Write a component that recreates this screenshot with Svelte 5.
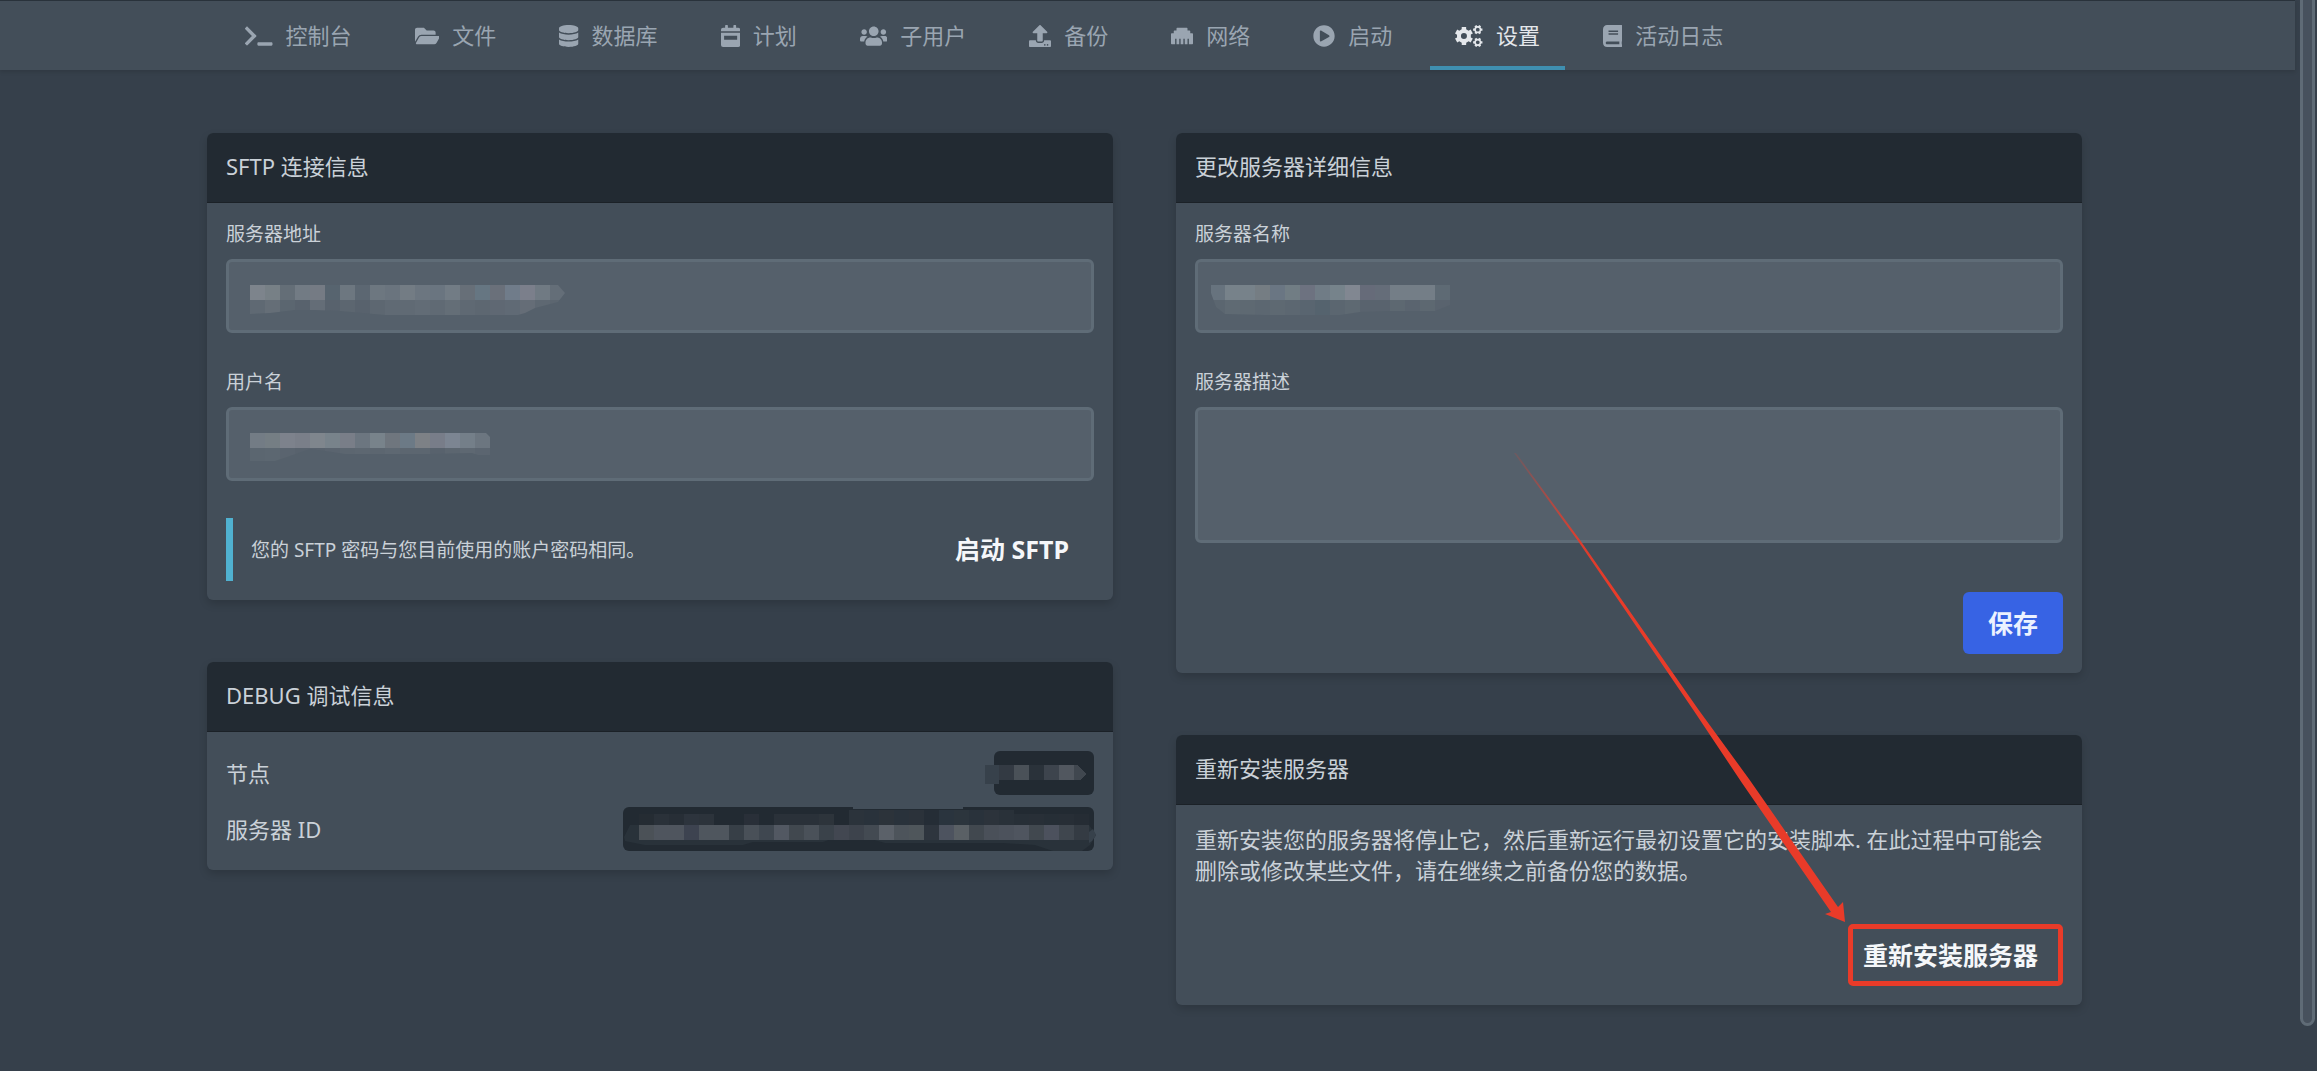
<script lang="ts">
  // outline of a six-toothed gear with a round hole
  const gear = (cx: number, cy: number, r: number, hole: number, turn: number) => {
    const steps: [number, number][] = [
      [-0.24, 1],
      [0.24, 1],
      [0.32, 0.76],
      [0.72, 0.76]
    ];
    const points: string[] = [];
    for (let i = 0; i < 6; i++) {
      for (const [offset, scale] of steps) {
        const angle = turn + (i * Math.PI) / 3 + offset;
        const x = cx + Math.cos(angle) * r * scale;
        const y = cy + Math.sin(angle) * r * scale;
        points.push(`${x.toFixed(1)} ${y.toFixed(1)}`);
      }
    }
    return `M${points.join('L')}ZM${cx - hole} ${cy}a${hole} ${hole} 0 1 0 ${hole * 2} 0a${hole} ${hole} 0 1 0 ${-hole * 2} 0Z`;
  };

  const tabs = [
    {
      label: '控制台',
      size: 640,
      path: 'M257.981 272.971L63.638 467.314c-9.373 9.373-24.569 9.373-33.941 0L7.029 444.647c-9.357-9.357-9.375-24.522-.04-33.901L161.011 256 6.99 101.255c-9.335-9.379-9.317-24.544.04-33.901l22.667-22.667c9.373-9.373 24.569-9.373 33.941 0L257.981 239.03c9.373 9.372 9.373 24.568 0 33.941zM640 456v-32c0-13.255-10.745-24-24-24H312c-13.255 0-24 10.745-24 24v32c0 13.255 10.745 24 24 24h304c13.255 0 24-10.745 24-24z'
    },
    {
      label: '文件',
      size: 576,
      path: 'M572.694 292.093L500.27 416.248A63.997 63.997 0 0 1 444.989 448H45.025c-18.523 0-30.064-20.093-20.731-36.093l72.424-124.155A64 64 0 0 1 152 256h399.964c18.523 0 30.064 20.093 20.73 36.093zM152 224h328v-48c0-26.51-21.49-48-48-48H272l-64-64H48C21.49 64 0 85.49 0 112v278.046l69.077-118.418C86.214 242.25 117.989 224 152 224z'
    },
    {
      label: '数据库',
      size: 448,
      path: 'M448 73.143v45.714C448 159.143 347.667 192 224 192S0 159.143 0 118.857V73.143C0 32.857 100.333 0 224 0s224 32.857 224 73.143zM448 176v102.857C448 319.143 347.667 352 224 352S0 319.143 0 278.857V176c48.125 33.143 136.208 48.572 224 48.572S399.874 209.143 448 176zm0 160v102.857C448 479.143 347.667 512 224 512S0 479.143 0 438.857V336c48.125 33.143 136.208 48.572 224 48.572S399.874 369.143 448 336z'
    },
    {
      label: '计划',
      size: 448,
      path: 'M144 0h-32a16 16 0 0 0-16 16v48H48a48 48 0 0 0-48 48v36h448v-36a48 48 0 0 0-48-48h-48V16a16 16 0 0 0-16-16h-32a16 16 0 0 0-16 16v48H160V16a16 16 0 0 0-16-16zM0 180v284a48 48 0 0 0 48 48h352a48 48 0 0 0 48-48V180zM72 250h304v96H72z'
    },
    {
      label: '子用户',
      size: 640,
      path: 'M96 224c35.3 0 64-28.7 64-64s-28.7-64-64-64-64 28.7-64 64 28.7 64 64 64zm448 0c35.3 0 64-28.7 64-64s-28.7-64-64-64-64 28.7-64 64 28.7 64 64 64zm32 32h-64c-17.6 0-33.5 7.1-45.1 18.6 40.3 22.1 68.9 62 75.1 109.4h66c17.7 0 32-14.3 32-32v-32c0-35.3-28.7-64-64-64zm-256 0c61.9 0 112-50.1 112-112S381.9 32 320 32 208 82.1 208 144s50.1 112 112 112zm76.8 32h-8.3c-20.8 10-43.9 16-68.5 16s-47.6-6-68.5-16h-8.3C179.6 288 128 339.6 128 403.2V432c0 26.5 21.5 48 48 48h288c26.5 0 48-21.5 48-48v-28.8c0-63.6-51.6-115.2-115.2-115.2zm-223.7-13.4C161.5 263.1 145.6 256 128 256H64c-35.3 0-64 28.7-64 64v32c0 17.7 14.3 32 32 32h65.9c6.3-47.4 34.9-87.3 75.2-109.4z'
    },
    {
      label: '备份',
      size: 512,
      path: 'M296 384h-80c-13.3 0-24-10.7-24-24V192h-87.7c-17.8 0-26.7-21.5-14.1-34.1L242.3 5.7c7.5-7.5 19.8-7.5 27.3 0l152.2 152.2c12.6 12.6 3.7 34.1-14.1 34.1H320v168c0 13.3-10.7 24-24 24zm216-8v112c0 13.3-10.7 24-24 24H24c-13.3 0-24-10.7-24-24V376c0-13.3 10.7-24 24-24h136v8c0 30.9 25.1 56 56 56h80c30.9 0 56-25.1 56-56v-8h136c13.3 0 24 10.7 24 24zm-124 88c0-11-9-20-20-20s-20 9-20 20 9 20 20 20 20-9 20-20zm64 0c0-11-9-20-20-20s-20 9-20 20 9 20 20 20 20-9 20-20z'
    },
    {
      label: '网络',
      size: 512,
      path: 'M496 192h-48v-48c0-8.8-7.2-16-16-16h-48V80c0-8.8-7.2-16-16-16H144c-8.8 0-16 7.2-16 16v48H80c-8.8 0-16 7.2-16 16v48H16c-8.8 0-16 7.2-16 16v224c0 8.8 7.2 16 16 16h80V320h32v128h64V320h32v128h64V320h32v128h64V320h32v128h80c8.8 0 16-7.2 16-16V208c0-8.8-7.2-16-16-16z'
    },
    {
      label: '启动',
      size: 512,
      path: 'M256 8C119 8 8 119 8 256s111 248 248 248 248-111 248-248S393 8 256 8zm115.7 272l-176 101c-15.8 8.8-35.7-2.5-35.7-21V152c0-18.4 19.8-29.8 35.7-21l176 107c16.4 9.2 16.4 32.9 0 42z'
    },
    {
      label: '设置',
      size: 640,
      active: true,
      path: gear(208, 256, 216, 70, Math.PI / 6) + gear(530, 108, 112, 44, 0) + gear(530, 404, 112, 44, 0)
    },
    {
      label: '活动日志',
      size: 448,
      path: 'M448 360V24c0-13.3-10.7-24-24-24H96C43 0 0 43 0 96v320c0 53 43 96 96 96h328c13.3 0 24-10.7 24-24v-16c0-7.5-3.5-14.3-8.9-18.7-4.2-15.4-4.2-59.3 0-74.7 5.4-4.3 8.9-11.1 8.9-18.6zM128 134c0-3.3 2.7-6 6-6h212c3.3 0 6 2.7 6 6v20c0 3.3-2.7 6-6 6H134c-3.3 0-6-2.7-6-6v-20zm0 64c0-3.3 2.7-6 6-6h212c3.3 0 6 2.7 6 6v20c0 3.3-2.7 6-6 6H134c-3.3 0-6-2.7-6-6v-20zm253.4 250H96c-17.7 0-32-14.3-32-32 0-17.6 14.4-32 32-32h285.4c-1.9 17.1-1.9 46.9 0 64z'
    }
  ];

  // mosaics that hide private values, 15px cells in two rows
  const masks = {
    address: {
      clip: '0,0 308,0 315,8 308,17 285,23 275,28 268,30 135,30 90,26 65,25 45,25 20,28 0,29',
      top: '7d848c 778086 646e77 727b84 757b84 57646f 6d7780 5c6772 6d7780 6a747e 737c84 6c7680 6a7580 727c85 676f78 667682 6a707a 707c8a 7b7f8b 707a83 646e78',
      bottom: '5f6973 656e77 5b6670 58626d 646d77 58626d 5c6670 58626d 5d6771 606a74 606a74 626c76 606a74 646e77 5f6973 5d6771 5f6873 606a75 656d77 5e6872 5c6670'
    },
    user: {
      clip: '0,0 236,0 240,4 240,22 228,22 222,20 180,21 95,21 75,18 60,16 40,23 25,28 0,28',
      top: '737c85 757e84 7d828c 7a7f89 7f868d 78838b 797e88 6c7680 78838b 6f767e 6c7a86 7d8186 787d89 7c8592 747f89 6c7680',
      bottom: '5b6670 5c6771 5a646f 58626d 58626d 5a646f 5c6670 5d6771 5c6670 5e6872 5c6670 5c6670 58626d 5c6670 5e6872 5b6570'
    },
    name: {
      clip: '1,0 240,0 240,20 225,26 180,26 150,27 130,30 55,30 15,29 6,22 1,8',
      top: '67737e 77828a 77828a 757d83 6a7683 717d84 6d7280 707c86 76838b 818791 666b79 656d79 747e87 747e87 747e87 5e6a74',
      bottom: '5b6670 5f6a73 5e6972 5c6771 5e6972 5c6771 596570 55636e 5b6670 5e6972 59636e 59636e 5d6871 5a646f 5d6871 59636e'
    }
  };

  const nodeCells = '37414b 333a43 4a5158 2a323a 3d444d 51575f 40474f'.split(' ');
  const idCells =
    '4b5157 4f555e 4f555e 3d4350 4f565e 4f565e 373f47 495058 3f4750 525862 41484f 4a5159 3a424a 424751 3d434c 434a52 5b6169 4d545b 4f565b 2e353e 4d535f 5a6065 41484f 4a5059 4c525c 4f555f 41484f 4c515d 3f464e 343b43'.split(' ');
  const idTop =
    '252c33 2a3139 272e36 2d343d 2c333b 222a32 222a32 292f38 222a32 2a3139 2a3139 2a3139 2d343b 222a32 2b333b 29323b 2c333a 29323b 2b323a 252d36 2a343e 2c353d 29323b 2c333b 293139 272f37 282f37 262e36 272e36 252c34'.split(' ');

  const description = '';
</script>

{#snippet mosaic(id: string, mask: { clip: string; top: string; bottom: string })}
  <svg class="mosaic" class:near={id === 'name'} width="315" height="30" viewBox="0 0 315 30" shape-rendering="crispEdges" aria-hidden="true">
    <clipPath id="clip-{id}"><polygon points={mask.clip} /></clipPath>
    <g clip-path="url(#clip-{id})">
      {#each mask.top.split(' ') as color, i}
        <rect x={i * 15} y="0" width="15" height="15" fill="#{color}" />
      {/each}
      {#each mask.bottom.split(' ') as color, i}
        <rect x={i * 15} y="15" width="15" height="15" fill="#{color}" />
      {/each}
    </g>
  </svg>
{/snippet}

<div class="page">
  <nav class="subnav">
    <div class="tabs">
      {#each tabs as tab}
        <a href="#{tab.label}" class="tab" class:active={tab.active}>
          <svg height="22" viewBox="0 0 {tab.size} 512" fill="currentColor" fill-rule="evenodd" aria-hidden="true">
            <path d={tab.path} />
          </svg>
          <span>{tab.label}</span>
        </a>
      {/each}
    </div>
  </nav>

  <main class="content">
    <div class="column">
      <section class="card">
        <h2>SFTP 连接信息</h2>
        <div class="card-body">
          <div class="field">
            <label for="sftp-address">服务器地址</label>
            <div class="control">
              <input id="sftp-address" type="text" readonly />
              {@render mosaic('address', masks.address)}
            </div>
          </div>
          <div class="field">
            <label for="sftp-user">用户名</label>
            <div class="control">
              <input id="sftp-user" type="text" readonly />
              {@render mosaic('user', masks.user)}
            </div>
          </div>
          <div class="notice-row">
            <div class="notice">
              <p>您的 SFTP 密码与您目前使用的账户密码相同。</p>
            </div>
            <button type="button" class="button">启动 SFTP</button>
          </div>
        </div>
      </section>

      <section class="card">
        <h2>DEBUG 调试信息</h2>
        <div class="card-body debug">
          <div class="debug-row">
            <p>节点</p>
            <code class="pill node">
              <svg width="109" height="44" viewBox="-9 0 109 44" shape-rendering="crispEdges" aria-hidden="true">
                <rect x="-9" y="14" width="14" height="19" fill="#37414b" />
                {#each nodeCells.slice(1, 6) as color, i}
                  <rect x={5 + i * 15} y="14" width="15" height="15" fill="#{color}" />
                {/each}
                <polygon points="80,14 84,14 92,23 87,29 80,29" fill="#40474f" />
              </svg>
            </code>
          </div>
          <div class="debug-row">
            <p>服务器 ID</p>
            <code class="pill">
              <svg width="473" height="44" viewBox="0 0 473 44" aria-hidden="true">
                <path d="M1 30L7 18H466L473 28L467 38L459 44H430L412 38L380 36H262L248 32H208L200 35H130L120 38H22L2 34Z" fill="#29323a" />
                {#each idTop as color, i}
                  <rect x={16 + i * 15} y={i > 13 && i < 25 ? 3 : 7} width="15" height={i > 13 && i < 25 ? 15 : 11} fill="#{color}" shape-rendering="crispEdges" />
                {/each}
                <path d="M230 0H340V2H230Z" fill="#434e59" />
                {#each idCells as color, i}
                  <rect x={16 + i * 15} y="18" width="15" height="15" fill="#{color}" shape-rendering="crispEdges" />
                {/each}
                <path d="M466 25L470 22L473 28L469 34L466 36Z" fill="#37414b" />
              </svg>
            </code>
          </div>
        </div>
      </section>
    </div>

    <div class="column">
      <section class="card">
        <h2>更改服务器详细信息</h2>
        <div class="card-body">
          <div class="field">
            <label for="server-name">服务器名称</label>
            <div class="control">
              <input id="server-name" type="text" />
              {@render mosaic('name', masks.name)}
            </div>
          </div>
          <div class="field">
            <label for="server-description">服务器描述</label>
            <textarea id="server-description" value={description}></textarea>
          </div>
          <div class="actions save-row">
            <button type="button" class="button primary">保存</button>
          </div>
        </div>
      </section>

      <section class="card">
        <h2>重新安装服务器</h2>
        <div class="card-body reinstall">
          <p>重新安装您的服务器将停止它，然后重新运行最初设置它的安装脚本. 在此过程中可能会删除或修改某些文件，请在继续之前备份您的数据。</p>
          <div class="actions">
            <button type="button" class="button marked">重新安装服务器</button>
          </div>
        </div>
      </section>

      <svg class="arrow" width="340" height="475" viewBox="0 0 340 475" aria-hidden="true">
        <defs>
          <linearGradient id="arrow-fade" x1="0" y1="0" x2="0" y2="1">
            <stop offset="0" stop-color="#e93b29" stop-opacity="0.15" />
            <stop offset="0.18" stop-color="#e93b29" stop-opacity="0.9" />
            <stop offset="0.3" stop-color="#e93b29" />
          </linearGradient>
        </defs>
        <polygon points="7,0 71,87 189,256 240,326 329,454 334,449 336,469 316,461 322,459 233,330 185,258 69,88 5,0" fill="url(#arrow-fade)" />
      </svg>
    </div>
  </main>

  <div class="scroll-thumb"></div>
</div>

<style>
  :global(body) {
    background: #36404b;
  }

  .page {
    box-sizing: border-box;
    min-height: 100vh;
    padding-right: 28px;
    overflow: hidden;
    background: #36404b;
    color: #cad1d8;
    font-family: 'Noto Sans', 'Noto Sans CJK SC', sans-serif;
    font-size: 22px;
    line-height: 31px;
  }

  .page * {
    box-sizing: border-box;
  }

  .subnav {
    margin-right: -6px;
    padding-right: 4px;
    background: #434e59;
    border-top: 1px solid #29323b;
    box-shadow: 0 2px 4px rgba(0, 0, 0, 0.12);
  }

  .tabs {
    display: flex;
    gap: 13px;
    max-width: 1875px;
    margin: 0 auto;
    padding: 0 12px;
  }

  .tab {
    display: flex;
    align-items: center;
    gap: 13px;
    height: 69px;
    padding: 0 25px;
    color: #9aa5b1;
    text-decoration: none;
    white-space: nowrap;
  }

  .tab.active {
    color: #e4e7eb;
    box-shadow: inset 0 -4px #3f8fb0;
  }

  .content {
    display: grid;
    grid-template-columns: 1fr 1fr;
    align-items: start;
    gap: 63px;
    max-width: 1875px;
    margin: 0 auto;
    padding: 63px 0;
  }

  .column {
    position: relative;
    display: flex;
    flex-direction: column;
    gap: 62px;
  }

  .card {
    background: #434e59;
    border-radius: 6px;
    box-shadow: 0 4px 8px rgba(0, 0, 0, 0.16);
  }

  .card h2 {
    height: 70px;
    margin: 0;
    padding: 18px 19px;
    background: #222a32;
    border-bottom: 1px solid #1b2127;
    border-radius: 6px 6px 0 0;
    font-size: 22px;
    font-weight: 400;
    line-height: 31px;
  }

  .card-body {
    display: flex;
    flex-direction: column;
    gap: 37px;
    padding: 19px;
  }

  .card-body p {
    margin: 0;
  }

  .field {
    display: flex;
    flex-direction: column;
    gap: 13px;
  }

  label {
    font-size: 19px;
    line-height: 24px;
  }

  .control {
    position: relative;
    display: flex;
  }

  input,
  textarea {
    display: block;
    width: 100%;
    margin: 0;
    padding: 16px;
    background: #55606b;
    border: 3px solid #5f6c77;
    border-radius: 6px;
    color: #cad1d8;
    font: inherit;
    outline: none;
    resize: none;
  }

  input {
    height: 74px;
  }

  textarea {
    height: 136px;
  }

  .mosaic {
    position: absolute;
    top: 26px;
    left: 24px;
    pointer-events: none;
  }

  .mosaic.near {
    left: 15px;
  }

  .notice-row {
    display: flex;
    align-items: center;
    justify-content: space-between;
  }

  .notice {
    display: flex;
    align-items: center;
    height: 63px;
    padding-left: 18px;
    border-left: 7px solid #50b1d0;
    font-size: 19px;
    line-height: 24px;
  }

  .button {
    position: relative;
    height: 62px;
    padding: 0 25px;
    background: none;
    border: 0;
    border-radius: 6px;
    color: #f5f7fa;
    font-family: inherit;
    font-size: 25px;
    font-weight: 700;
    line-height: 31px;
    cursor: pointer;
  }

  .button.primary {
    background: #3763e4;
    color: #ebf1ff;
  }

  .button.marked::after {
    content: '';
    position: absolute;
    inset: 0 0 0 10px;
    border: 5px solid #e93b29;
    border-radius: 5px;
  }

  .actions {
    display: flex;
    justify-content: flex-end;
  }

  .save-row {
    padding-top: 12px;
  }

  .reinstall {
    gap: 38px;
  }

  .reinstall p {
    padding-right: 12px;
  }

  .debug {
    gap: 12px;
  }

  .debug-row {
    display: flex;
    align-items: center;
    justify-content: space-between;
  }

  .pill {
    display: flex;
    width: 471px;
    height: 44px;
    background: #222a32;
    border-radius: 6px;
  }

  .pill.node {
    justify-content: flex-end;
    width: 100px;
  }

  .pill svg {
    flex: none;
  }

  .arrow {
    position: absolute;
    top: 320px;
    right: 233px;
    pointer-events: none;
  }

  .scroll-thumb {
    position: fixed;
    top: -8px;
    right: 2px;
    bottom: 45px;
    width: 15px;
    background: #47515d;
    border: 3px solid #5f6b76;
    border-radius: 8px;
  }
</style>
